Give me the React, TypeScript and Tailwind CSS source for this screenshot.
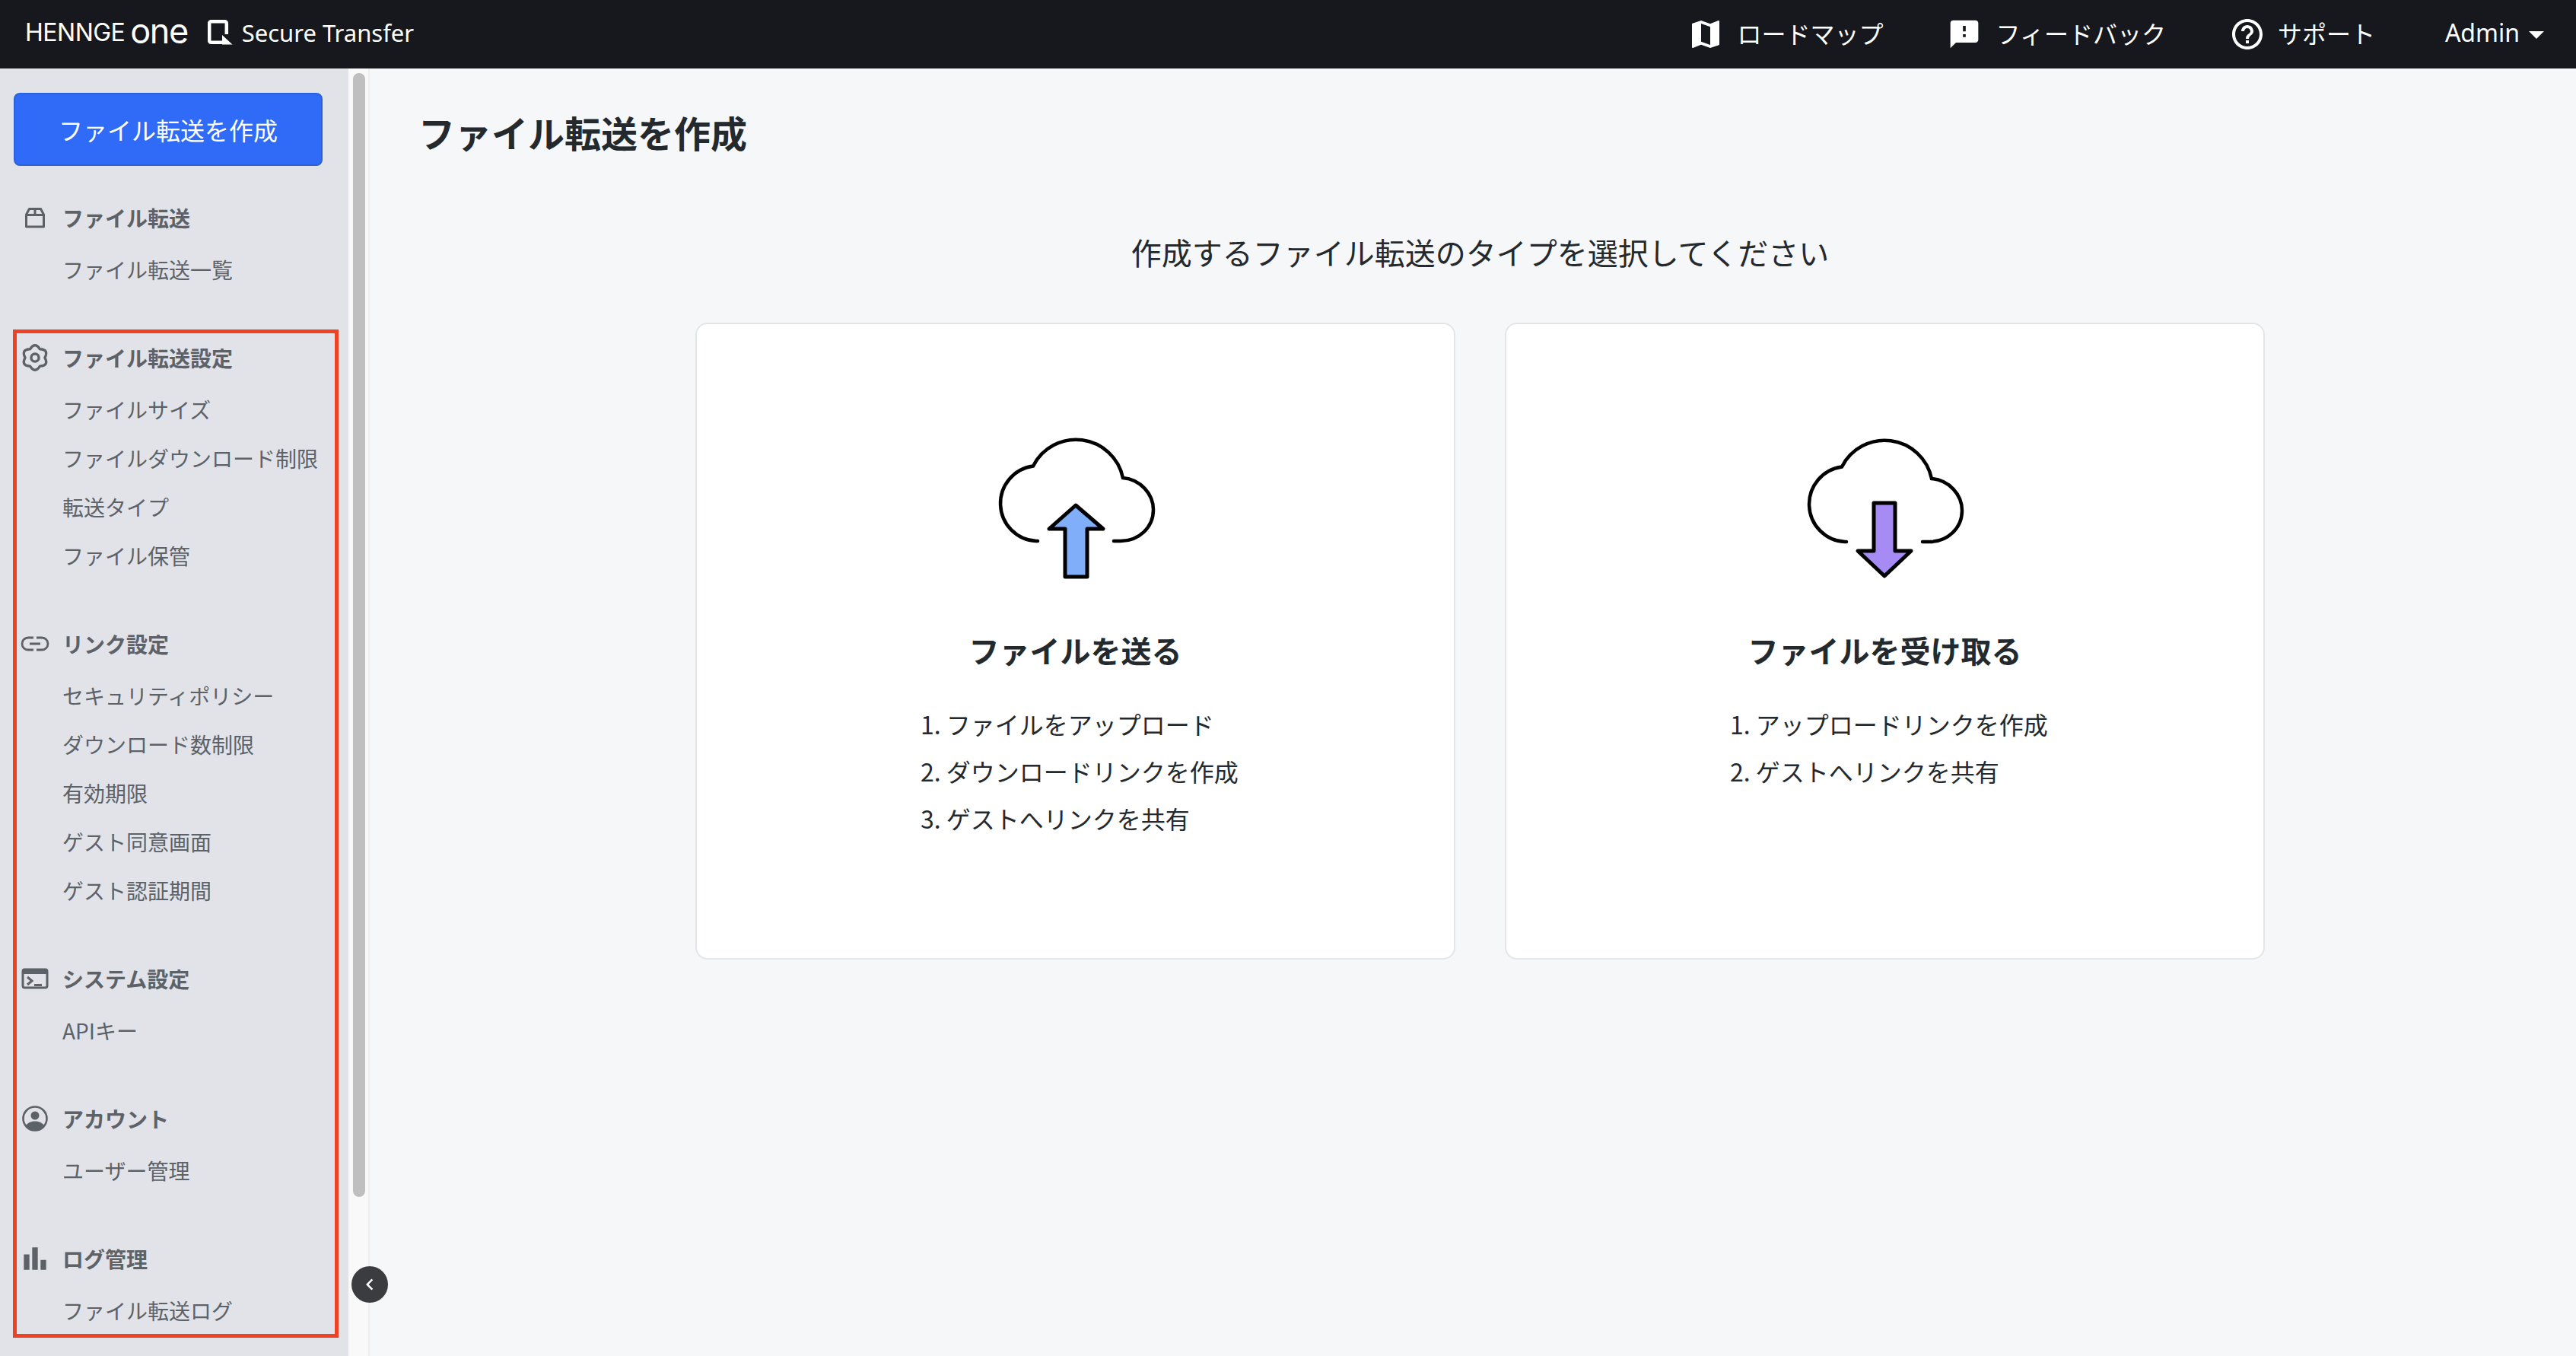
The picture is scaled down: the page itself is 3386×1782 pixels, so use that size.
import React from "react";
import { MdMap, MdFeedback, MdHelpOutline, MdArrowDropDown, MdBarChart, MdChevronLeft } from "react-icons/md";

const cjk = "font-['Noto_Sans_CJK_JP','Noto_Sans',sans-serif]";

const BoxIcon = () => (
  <svg width="32" height="32" viewBox="0 0 32 32" fill="none" stroke="currentColor" strokeWidth="3">
    <path d="M4.500 28V12L8.500 4.500h15L27.500 12v16z" strokeLinejoin="round" />
    <path d="M4.500 12.500h23M16 4.500v8" />
  </svg>
);

const GearIcon = () => (
  <svg width="36" height="36" viewBox="0 0 32 32" fill="none" stroke="currentColor" strokeWidth="3" strokeLinejoin="round">
    <path d="M10.250 6.040Q16 -3 21.750 6.040Q32.450 6.500 27.500 16Q32.450 25.500 21.750 25.960Q16 35 10.250 25.960Q-0.450 25.500 4.500 16Q-0.450 6.500 10.250 6.040z" />
    <circle cx="16" cy="16" r="4.500" />
  </svg>
);

const LinkIcon = () => (
  <svg width="38" height="32" viewBox="0 0 38 32" fill="none" stroke="currentColor" strokeWidth="2.800">
    <path d="M17 8H10a8 8 0 0 0 0 16h7M21 8h7a8 8 0 0 1 0 16h-7M12 16h14" />
  </svg>
);

const TerminalIcon = () => (
  <svg width="36" height="32" viewBox="0 0 36 32" fill="none">
    <rect x="2" y="4" width="32" height="24" rx="2.500" stroke="currentColor" strokeWidth="3" />
    <path d="M2 6.500A2.500 2.500 0 0 1 4.500 4h27A2.500 2.500 0 0 1 34 6.500V10H2z" fill="currentColor" />
    <path d="M8 14l6 5-6 5M17 24.500h10" stroke="currentColor" strokeWidth="3" />
  </svg>
);

const AccountIcon = () => (
  <svg width="34" height="34" viewBox="0 0 34 34">
    <circle cx="17" cy="17" r="15.500" fill="none" stroke="currentColor" strokeWidth="2.600" />
    <circle cx="17" cy="13" r="5.500" fill="currentColor" />
    <path d="M5 26c3-4 7.500-5.500 12-5.500S26 22 29 26c-3 4-7.500 6.500-12 6.500S8 30 5 26z" fill="currentColor" />
  </svg>
);

const HeaderMark = () => (
  <svg width="33" height="33" viewBox="0 0 33 33" fill="none" className="ml-[26px] -translate-y-[3px]">
    <path d="M24.800 19V4.500a2.300 2.300 0 0 0-2.300-2.300h-18a2.300 2.300 0 0 0-2.300 2.300v23a2.300 2.300 0 0 0 2.300 2.300H20" stroke="#fff" strokeWidth="4.500" />
    <path d="M19 20l13.500 12.500H19z" fill="#fff" />
  </svg>
);

const UploadCloud = () => (
  <svg width="350" height="260" viewBox="0 0 350 260" fill="none" stroke="#000" className="mx-auto block">
    <path d="M125 171h-2A49.500 49.500 0 0 1 119 72.500 63 63 0 0 1 237 88C260 90 277 109 277 130C277 153 258 171 234 171h-9" strokeWidth="4.500" strokeLinecap="round" />
    <path d="M175 124l36 31h-21v63h-29v-63h-21z" fill="#80aef9" strokeWidth="5" strokeLinejoin="round" />
  </svg>
);

const DownloadCloud = () => (
  <svg width="358" height="260" viewBox="0 0 358 260" fill="none" stroke="#000" className="mx-auto block">
    <path d="M128 172h-2A49.500 49.500 0 0 1 122 73.500 63 63 0 0 1 240 89C263 91 280 110 280 131C280 154 261 172 237 172h-9" strokeWidth="4.500" strokeLinecap="round" />
    <path d="M164 121h28v63h21l-35 33-35-33h21z" fill="#a78bf5" strokeWidth="5" strokeLinejoin="round" />
  </svg>
);

const sections = [
  { title: "ファイル転送", icon: <BoxIcon />, items: ["ファイル転送一覧"] },
  { title: "ファイル転送設定", icon: <GearIcon />, items: ["ファイルサイズ", "ファイルダウンロード制限", "転送タイプ", "ファイル保管"] },
  { title: "リンク設定", icon: <LinkIcon />, items: ["セキュリティポリシー", "ダウンロード数制限", "有効期限", "ゲスト同意画面", "ゲスト認証期間"] },
  { title: "システム設定", icon: <TerminalIcon />, items: ["APIキー"] },
  { title: "アカウント", icon: <AccountIcon />, items: ["ユーザー管理"] },
  { title: "ログ管理", icon: <MdBarChart size={44} />, items: ["ファイル転送ログ"] },
];

const cards = [
  { title: "ファイルを送る", icon: <UploadCloud />, steps: ["1. ファイルをアップロード", "2. ダウンロードリンクを作成", "3. ゲストへリンクを共有"] },
  { title: "ファイルを受け取る", icon: <DownloadCloud />, steps: ["1. アップロードリンクを作成", "2. ゲストへリンクを共有"] },
];

const App: React.FC = () => {
  return (
    <div className={`relative flex h-screen w-full flex-col overflow-hidden ${cjk}`}>
      {/* top bar */}
      <header className="flex h-[90px] shrink-0 items-center bg-[#16181d] pl-[33px] text-white">
        <span className="-translate-y-[2px] font-['Inter'] text-[32px] leading-none font-normal tracking-[-0.5px]">HENNGE</span>
        <span className="ml-[7px] -translate-y-[5px] font-['Inter'] text-[45px] leading-none font-normal tracking-[-1.5px]">one</span>
        <HeaderMark />
        <span className="ml-[12px] -translate-y-[2px] font-['Noto_Sans'] text-[31px] leading-none">Secure Transfer</span>
        <nav className="ml-auto flex items-center pr-[40px] text-[32px] leading-[44px]">
          <div className="flex items-center">
            <MdMap size={48} />
            <span className="ml-[18px] -translate-y-[2px]">ロードマップ</span>
          </div>
          <div className="ml-[84px] flex items-center">
            <MdFeedback size={44} />
            <span className="ml-[20px] -translate-y-[2px]">フィードバック</span>
          </div>
          <div className="ml-[83px] flex items-center">
            <MdHelpOutline size={48} />
            <span className="ml-[16px] -translate-y-[2px]">サポート</span>
          </div>
          <div className="ml-[92px] flex items-center">
            <span className="-translate-y-[2px] font-['Noto_Sans']">Admin</span>
            <MdArrowDropDown size={48} className="-mr-[12px] -ml-[2px]" />
          </div>
        </nav>
      </header>

      <div className="flex min-h-0 flex-1">
        {/* side menu */}
        <aside className="relative w-[458px] shrink-0 overflow-hidden bg-[#e1e3e8]">
          <button className="mt-[32px] ml-[18px] h-[96px] w-[406px] rounded-[8px] border-2 border-[#2b62dc] bg-[#2f6bf6] text-[32px] text-white">
            ファイル転送を作成
          </button>
          <div className="mt-[36px] flex flex-col gap-[52px]">
            {sections.map((s) => (
              <div key={s.title}>
                <div className="mb-[4px] flex h-[64px] items-center text-[#5c6268]">
                  <span className="flex w-[82px] shrink-0 items-center justify-center pl-[10px]">{s.icon}</span>
                  <span className="text-[28px] font-bold">{s.title}</span>
                </div>
                {s.items.map((item) => (
                  <div key={item} className="flex h-[64px] items-center pl-[82px] text-[28px] whitespace-nowrap text-[#5c6268]">
                    {item}
                  </div>
                ))}
              </div>
            ))}
          </div>
          {/* red annotation frame */}
          <div className="pointer-events-none absolute top-[343px] left-[17px] h-[1325px] w-[428px] border-[5px] border-[#ee4224]" />
        </aside>

        {/* scroll gutter */}
        <div className="w-[26px] shrink-0 bg-[#f9f9f9]">
          <div className="mt-[6px] ml-[6px] h-[1477px] w-[16px] rounded-full bg-[#bfbfbf]" />
        </div>

        {/* main */}
        <main className="min-w-0 flex-1 border-l-2 border-[#eceef0] bg-[#f6f7f9] pr-[45px] pl-[64px] text-[#24292e]">
          <h1 className="mt-[47px] text-[48px] leading-[72px] font-bold">ファイル転送を作成</h1>
          <p className="mt-[92px] text-center text-[40px] leading-[60px]">作成するファイル転送のタイプを選択してください</p>
          <div className="mt-[63px] flex justify-center gap-[65px]">
            {cards.map((c) => (
              <div key={c.title} className="h-[837px] w-[999px] rounded-[16px] border-2 border-[#e3e5e8] bg-white pt-[114px]">
                {c.icon}
                <h2 className="mt-[24px] text-center text-[40px] leading-[60px] font-bold">{c.title}</h2>
                <ol className="mt-[36px] pl-[294px] text-[32px] leading-[62px]">
                  {c.steps.map((st) => (
                    <li key={st}>{st}</li>
                  ))}
                </ol>
              </div>
            ))}
          </div>
        </main>
      </div>

      {/* collapse toggle */}
      <button className="absolute top-[1664px] left-[462px] flex h-[48px] w-[48px] items-center justify-center rounded-full bg-[#3a3c40] text-white">
        <MdChevronLeft size={30} />
      </button>
    </div>
  );
};

export default App;
